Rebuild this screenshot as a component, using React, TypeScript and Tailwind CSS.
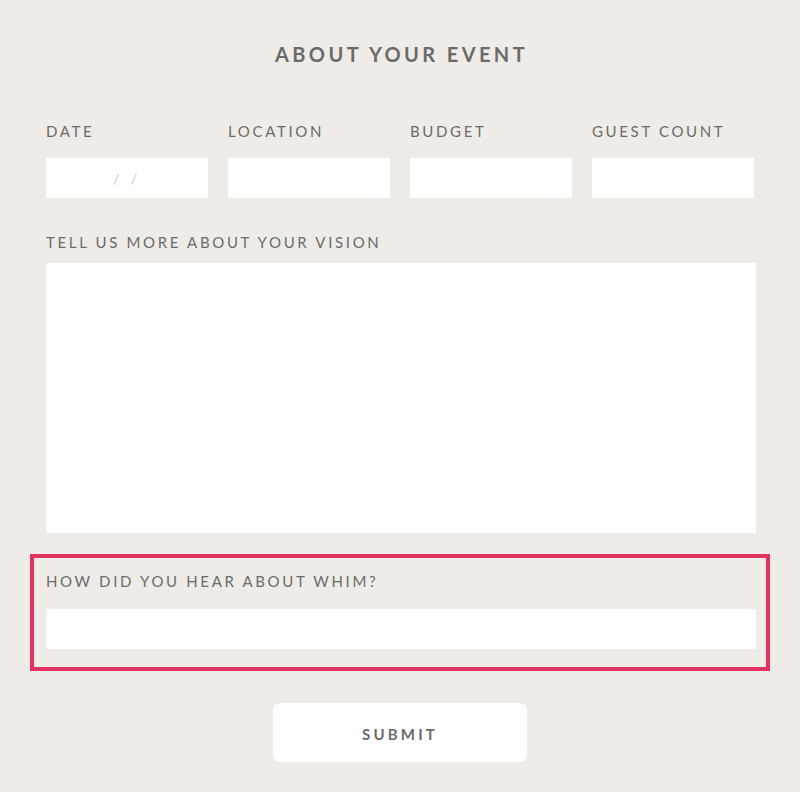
const labelCls =
  "block h-[20px] leading-[20px] text-[15px] tracking-[2.65px] uppercase text-[#6b6b6b]";

function Field({ label }: { label: string }) {
  return (
    <div className="flex flex-col">
      <label className={labelCls}>{label}</label>
      <div className="mt-[17px] h-[40px] bg-white" />
    </div>
  );
}

export default function App() {
  return (
    <div
      className="min-h-[792px] w-full bg-[#efece8] pt-[42px]"
      style={{ fontFamily: "Lato, 'Open Sans', sans-serif" }}
    >
      <h1 className="h-[24px] pl-[3px] text-center text-[20px] font-bold leading-[24px] tracking-[3.4px] text-[#6b6b6b]">
        ABOUT YOUR EVENT
      </h1>

      <div className="ml-[46px] w-[710px]">
        <div className="mt-[55px] grid grid-cols-[162px_162px_162px_162px] gap-x-[20px]">
          <div className="flex flex-col">
            <label className={labelCls}>Date</label>
            <div className="mt-[17px] flex h-[40px] items-center justify-center bg-white text-[14px] tracking-[4px] text-[#c4c4c4]">
              / /
            </div>
          </div>
          <Field label="Location" />
          <Field label="Budget" />
          <Field label="Guest Count" />
        </div>

        <label className={`${labelCls} mt-[34px]`}>Tell us more about your vision</label>
        <div className="mt-[11px] h-[270px] bg-white" />

        <div className="ml-[-16px] mr-[-14px] mt-[21px] border-[4px] border-[#e2325f] pb-[18px] pl-[12px] pr-[10px] pt-[13px]">
          <label className={labelCls}>How did you hear about Whim?</label>
          <div className="mt-[18px] h-[40px] bg-white" />
        </div>
      </div>

      <div className="mt-[32px] flex justify-center">
        <button className="h-[59px] w-[254px] rounded-[7px] bg-white pt-[3px] text-[15px] font-bold tracking-[3.2px] text-[#6b6b6b]">
          SUBMIT
        </button>
      </div>
    </div>
  );
}
